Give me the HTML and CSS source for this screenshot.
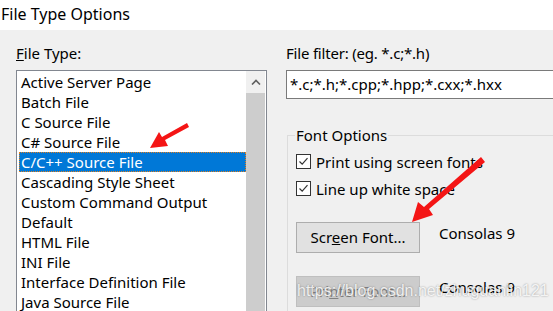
FILE: index.html
```html
<!DOCTYPE html>
<html lang="en">
<head>
  <meta charset="UTF-8" />
  <title>File Type Options</title>
  <link rel="stylesheet" href="styles.css">
</head>
<body>

  <div class="titlebar">File Type Options</div>

  <div class="dialog">
    <div class="left">
      <div class="label"><u>F</u>ile Type:</div>
      <div class="listbox">
        <ul class="items">
          <li>Active Server Page</li>
          <li>Batch File</li>
          <li>C Source File</li>
          <li>C# Source File</li>
          <li class="selected">C/C++ Source File</li>
          <li>Cascading Style Sheet</li>
          <li>Custom Command Output</li>
          <li>Default</li>
          <li>HTML File</li>
          <li>INI File</li>
          <li>Interface Definition File</li>
          <li>Java Source File</li>
        </ul>
        <div class="scrollbar">
          <div class="arrow-up">
            <svg width="10" height="6" viewBox="0 0 10 6"><path d="M1 5.5 L5 1.5 L9 5.5" fill="none" stroke="#606060" stroke-width="1.6"/></svg>
          </div>
          <div class="thumb"></div>
        </div>
      </div>
    </div>

    <div class="right">
      <div class="label">File filter: (eg. *.c;*.h)</div>
      <div class="textbox">*.c;*.h;*.cpp;*.hpp;*.cxx;*.hxx</div>

      <fieldset class="group">
        <legend>Font Options</legend>
        <div class="check">
          <span class="box"><svg width="13" height="13" viewBox="0 0 13 13"><path d="M2.5 6.5 L5.2 9.2 L10.5 3.2" fill="none" stroke="#333" stroke-width="1.2"/></svg></span>
          Print using screen fonts
        </div>
        <div class="check">
          <span class="box"><svg width="13" height="13" viewBox="0 0 13 13"><path d="M2.5 6.5 L5.2 9.2 L10.5 3.2" fill="none" stroke="#333" stroke-width="1.2"/></svg></span>
          Line up white space
        </div>
        <div class="font-row">
          <div class="btn">Scr<u>e</u>en Font...</div>
          <span class="font-name">Consolas 9</span>
        </div>
        <div class="font-row">
          <div class="btn disabled">Pri<u>n</u>ter Font...</div>
          <span class="font-name">Consolas 9</span>
        </div>
      </fieldset>
    </div>
  </div>

  <svg class="marks" width="553" height="311" viewBox="0 0 553 311">
    <polygon fill="#f41515" points="187,123 189,127 165,140 168,146 150,148 159,132 162,137"/>
    <polygon fill="#f41515" points="481,157 485,162 429,209 433,215 412,222 418,202 424,207"/>
  </svg>

  <div class="watermark">https://blog.csdn.net/zhuguanlin121</div>

</body>
</html>
```

FILE: styles.css
```css
body {
  margin: 0;
  width: 553px;
  height: 311px;
  overflow: hidden;
  background: #f0f0f0;
  color: #000;
  font-family: "Noto Sans", "Open Sans", sans-serif;
  font-size: 15px;
  position: relative;
}

.titlebar {
  height: 30px;
  line-height: 28px;
  background: #fff;
  padding-left: 1px;
  font-size: 16px;
}

.dialog {
  display: flex;
  height: 281px;
  padding: 14px 0 0 16px;
  box-sizing: border-box;
  overflow: hidden;
}

.left {
  width: 251px;
  flex: none;
}

.label {
  height: 26px;
  line-height: 18px;
}

.listbox {
  display: flex;
  height: 250px;
  border: 1px solid #828790;
  border-bottom: none;
  background: #fff;
}

.items {
  list-style: none;
  margin: 1px 0 0 0;
  padding: 0 0 0 2px;
  flex: 1;
}

.items li {
  height: 20px;
  line-height: 20px;
  padding-left: 2px;
  white-space: nowrap;
}

.items li.selected {
  background: #0078d7;
  color: #fff;
  outline: 1px dotted #e08020;
  outline-offset: -1px;
}

.scrollbar {
  width: 19px;
  margin-right: 1px;
  background: #f0f0f0;
  display: flex;
  flex-direction: column;
}

.arrow-up {
  height: 22px;
  display: flex;
  align-items: center;
  justify-content: center;
}

.thumb {
  flex: 1;
  background: #cdcdcd;
}

.right {
  margin-left: 19px;
  flex: 1;
}

.right .label {
  letter-spacing: -0.2px;
}

.textbox {
  height: 27px;
  line-height: 27px;
  border: 1px solid #7a7a7a;
  border-right: none;
  background: #fff;
  padding-left: 3px;
  white-space: nowrap;
}

.group {
  margin: 28px 0 0 1px;
  padding: 5px 0 0 8px;
  border: 1px solid #dcdcdc;
  border-right: none;
  border-bottom: none;
  height: 200px;
}

.group legend {
  padding: 0 1px;
  margin-left: -1px;
  line-height: 16px;
}

.check {
  display: flex;
  align-items: center;
  height: 27px;
}

.box {
  width: 13px;
  height: 13px;
  border: 1px solid #333;
  background: #fff;
  margin-right: 5px;
  display: flex;
}

.font-row {
  display: flex;
  align-items: flex-start;
  margin-top: 20px;
}

.font-row + .font-row {
  margin-top: 23px;
}

.btn {
  width: 122px;
  height: 29px;
  line-height: 29px;
  text-align: center;
  background: #e1e1e1;
  border: 1px solid #adadad;
}

.btn.disabled {
  background: #cccccc;
  border-color: #bfbfbf;
  color: #838383;
}

.font-name {
  margin-left: 19px;
  line-height: 20px;
  margin-top: 1px;
}

.marks {
  position: absolute;
  left: 0;
  top: 0;
  pointer-events: none;
}

.watermark {
  position: absolute;
  left: 297px;
  top: 282px;
  font-family: "Liberation Sans", Arial, sans-serif;
  font-size: 16px;
  color: rgba(255, 255, 255, 0.85);
  text-shadow: 0 0 2px rgba(0, 0, 0, 0.4);
  pointer-events: none;
}
```
